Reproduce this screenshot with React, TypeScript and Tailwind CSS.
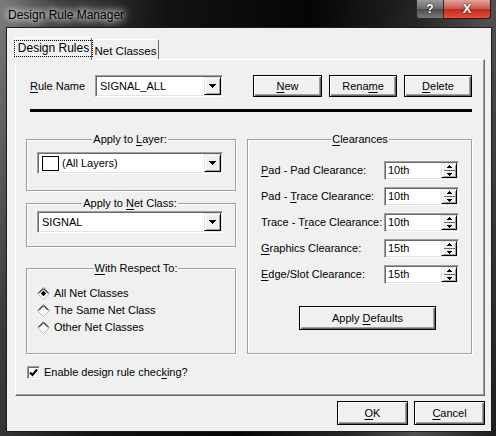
import React from 'react';

const sunken =
  'border border-t-[#a0a0a0] border-l-[#a0a0a0] border-r-white border-b-white bg-white shadow-[inset_1px_1px_0_#696969,inset_-1px_-1px_0_#e3e3e3]';
const raised =
  'border border-t-[#e3e3e3] border-l-[#e3e3e3] border-r-black border-b-black bg-[#f0f0f0] shadow-[inset_1px_1px_0_#fff,inset_-1px_-1px_0_#a0a0a0]';
const btn =
  'flex items-center justify-center whitespace-nowrap border border-black bg-[#f0f0f0] shadow-[inset_1px_1px_0_#fff,inset_-1px_-1px_0_#696969,inset_-2px_-2px_0_#a0a0a0]';
const etched = 'border border-[#a0a0a0] shadow-[inset_1px_1px_0_#fff,1px_1px_0_#fff]';

const U = ({ children }: { children: React.ReactNode }) => (
  <span className="underline decoration-1 underline-offset-[2px]">{children}</span>
);

const DownArrow = () => (
  <svg width="7" height="4" viewBox="0 0 7 4" shapeRendering="crispEdges">
    <path d="M0 0h7v1h-1v1h-1v1h-1v1h-1v-1h-1v-1h-1v-1h-1z" fill="#000" />
  </svg>
);

const SpinUp = () => (
  <svg width="5" height="3" viewBox="0 0 5 3" shapeRendering="crispEdges">
    <path d="M2 0h1v1h1v1h1v1h-5v-1h1v-1h1z" fill="#000" />
  </svg>
);

const SpinDown = () => (
  <svg width="5" height="3" viewBox="0 0 5 3" shapeRendering="crispEdges">
    <path d="M0 0h5v1h-1v1h-1v1h-1v-1h-1v-1h-1z" fill="#000" />
  </svg>
);

const Combo = ({ className, children }: { className: string; children: React.ReactNode }) => (
  <div className={`flex h-[22px] p-px ${sunken} ${className}`}>
    <div className="flex flex-1 items-center gap-[3px] whitespace-nowrap pl-[3px]">{children}</div>
    <div className={`flex w-[17px] items-center justify-center ${raised}`}>
      <DownArrow />
    </div>
  </div>
);

const Spin = ({ value }: { value: string }) => (
  <div className={`flex h-[19px] w-[75px] p-px ${sunken}`}>
    <div className="flex flex-1 items-center pl-[2px]">{value}</div>
    <div className={`flex w-[16px] flex-col items-center justify-center gap-[2px] ${raised}`}>
      <SpinUp />
      <div className="h-px w-[11px] bg-[#696969]" />
      <SpinDown />
    </div>
  </div>
);

const Group = ({ title, className, children }: { title: React.ReactNode; className: string; children: React.ReactNode }) => (
  <fieldset className={`${etched} ${className}`}>
    <legend className="mx-auto whitespace-nowrap bg-[#f0f0f0] px-px leading-[13px]">{title}</legend>
    {children}
  </fieldset>
);

const Radio = ({ checked }: { checked?: boolean }) => (
  <svg width="13" height="13" viewBox="0 0 13 13" className="shrink-0">
    <path d="M6.5 0.5 12.5 6.5 6.5 12.5 0.5 6.5z" fill="#fff" />
    <path d="M0.5 6.5 6.5 0.5 12.5 6.5" fill="none" stroke="#808080" />
    <path d="M1.8 6.5 6.5 1.8 11.2 6.5" fill="none" stroke="#000" />
    <path d="M12.5 6.5 6.5 12.5 0.5 6.5" fill="none" stroke="#b8b8b8" />
    <path d="M11.2 6.5 6.5 11.2 1.8 6.5" fill="none" stroke="#fff" />
    {checked && <path d="M6.5 3.8 9.2 6.5 6.5 9.2 3.8 6.5z" fill="#000" />}
  </svg>
);

const clearances: [React.ReactNode, string][] = [
  [<><U>P</U>ad - Pad Clearance:</>, '10th'],
  [<>Pad - <U>T</U>race Clearance:</>, '10th'],
  [<>Trace - T<U>r</U>ace Clearance:</>, '10th'],
  [<><U>G</U>raphics Clearance:</>, '15th'],
  [<><U>E</U>dge/Slot Clearance:</>, '15th'],
];

export default function App() {
  return (
    <div className="flex h-[436px] w-[496px] flex-col overflow-hidden bg-[linear-gradient(100deg,#7c7c7c_0%,#3c3c3c_10%,#121212_30%,#050505_55%,#262626_74%,#505050_86%,#1c1c1c_100%)] font-['Liberation_Sans',Arial,sans-serif] text-[11px] text-black">
      <div className="flex h-[27px] shrink-0 items-start justify-between">
        <div className="ml-[8px] mt-[6px] text-[12px] [text-shadow:0_0_6px_#fff,0_0_10px_#fff,0_0_16px_rgba(255,255,255,0.8)]">
          Design Rule Manager
        </div>
        <div className="mr-[5px] flex">
          <div className="flex h-[19px] w-[28px] items-center justify-center rounded-bl-[4px] border border-t-0 border-[#2a2a2a] bg-[linear-gradient(#9a9a9a,#6a6a6a_50%,#4a4a4a_51%,#7a7a7a)] text-[12px] font-bold text-white [text-shadow:0_0_2px_#000]">
            ?
          </div>
          <div className="flex h-[19px] w-[47px] items-center justify-center rounded-br-[4px] border border-l-0 border-t-0 border-[#3a1010] bg-[linear-gradient(#e0a49c,#c9574c_50%,#c4281c_51%,#e2503c)] text-[13px] font-bold text-white [text-shadow:0_0_2px_#000]">
            X
          </div>
        </div>
      </div>

      <div className="mb-[4px] ml-[6px] flex w-[486px] flex-1 flex-col border border-[#1c1c1c] bg-[#f0f0f0] pl-[8px] pr-[6px] pt-[8px]">
        <div className="flex h-[23px] items-end">
          <div className="relative z-10 -mb-px flex h-[23px] w-[77px] items-start justify-center rounded-t-[2px] border border-b-0 border-l-white border-t-white border-r-[#696969] bg-[#f0f0f0] pt-[3px]">
            <span className="whitespace-nowrap px-[3px] text-[12px] leading-[15px] outline-1 outline-dotted outline-black">
              Design Rules
            </span>
          </div>
          <div className="flex h-[20px] w-[67px] items-start justify-center whitespace-nowrap rounded-t-[2px] border border-b-0 border-l-white border-t-white border-r-[#696969] pt-[3px] text-[11.5px]">
            Net Classes
          </div>
        </div>

        <div className="flex h-[337px] flex-col border border-l-white border-t-white border-r-[#696969] border-b-[#696969] shadow-[inset_-1px_-1px_0_#a0a0a0]">
          <div className="mt-[15px] flex h-[22px] items-center pl-[14px] pr-[12px]">
            <div className="w-[65px] whitespace-nowrap">
              <U>R</U>ule Name
            </div>
            <Combo className="w-[128px]">SIGNAL_ALL</Combo>
            <div className="ml-auto flex gap-[7px]">
              <div className={`${btn} h-[22px] w-[69px]`}>
                <span><U>N</U>ew</span>
              </div>
              <div className={`${btn} h-[22px] w-[68px]`}>
                <span>Rena<U>m</U>e</span>
              </div>
              <div className={`${btn} h-[22px] w-[68px]`}>
                <span><U>D</U>elete</span>
              </div>
            </div>
          </div>

          <div className="ml-[14px] mr-[12px] mt-[12px] h-[3px] bg-black" />

          <div className="mt-[21px] flex gap-[11px] pl-[10px]">
            <div className="flex w-[210px] flex-col">
              <Group title={<>Apply to <U>L</U>ayer:</>} className="h-[58px] pl-[10px] pr-[12px]">
                <Combo className="mt-[6px] w-[186px]">
                  <div className="h-[15px] w-[17px] border border-black bg-white" />
                  (All Layers)
                </Combo>
              </Group>
              <Group title={<>Apply to <U>N</U>et Class:</>} className="mt-[6px] h-[50px] pl-[10px] pr-[12px]">
                <Combo className="mt-[1px] w-[186px]">SIGNAL</Combo>
              </Group>
              <Group title={<><U>W</U>ith Respect To:</>} className="mt-[15px] h-[92px] pl-[10px]">
                <div className="mt-[10px] flex flex-col">
                  {[
                    ['All Net Classes', true],
                    ['The Same Net Class', false],
                    ['Other Net Classes', false],
                  ].map(([label, on]) => (
                    <div key={label as string} className="flex h-[17px] items-center gap-[4px] whitespace-nowrap">
                      <Radio checked={on as boolean} />
                      <span>{label}</span>
                    </div>
                  ))}
                </div>
              </Group>
              <div className="mt-[10px] flex items-center gap-[4px] whitespace-nowrap pl-px">
                <div className={`flex h-[13px] w-[13px] items-center justify-center ${sunken}`}>
                  <svg width="9" height="9" viewBox="0 0 9 9">
                    <path d="M1 4.5 3.5 7 8 1.5" fill="none" stroke="#000" strokeWidth="2" />
                  </svg>
                </div>
                <span>
                  Enable design rule chec<U>k</U>ing?
                </span>
              </div>
            </div>

            <Group title={<><U>C</U>learances</>} className="h-[221px] w-[224px] pl-[13px] pr-[12px]">
              <div className="mt-[15px] flex flex-col gap-[7px]">
                {clearances.map(([label, value], i) => (
                  <div key={i} className="flex h-[19px] items-center">
                    <div className="w-[123px] whitespace-nowrap">{label}</div>
                    <Spin value={value} />
                  </div>
                ))}
              </div>
              <div className={`${btn} ml-[38px] mt-[22px] h-[24px] w-[137px]`}>
                <span>Apply <U>D</U>efaults</span>
              </div>
            </Group>
          </div>
        </div>

        <div className="mt-[5px] flex justify-end gap-[6px]">
          <div className={`${btn} h-[24px] w-[71px]`}>
            <span><U>O</U>K</span>
          </div>
          <div className={`${btn} h-[24px] w-[71px]`}>
            <span><U>C</U>ancel</span>
          </div>
        </div>
      </div>
    </div>
  );
}
